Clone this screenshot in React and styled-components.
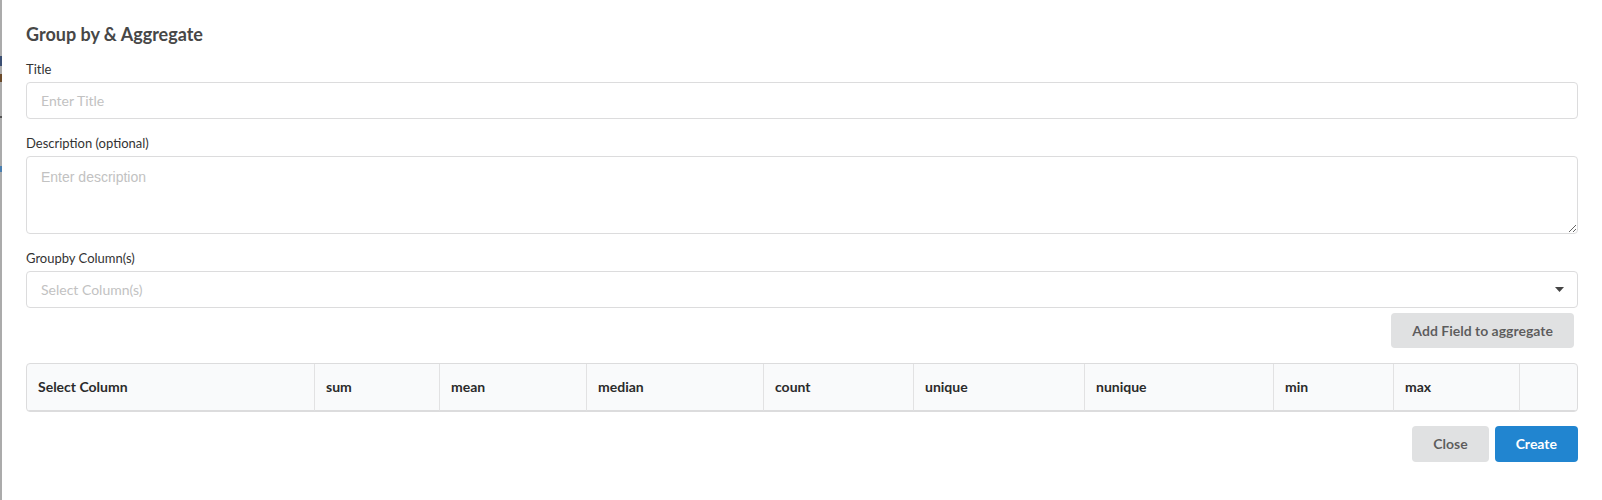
import React from "react";
import styled, { createGlobalStyle } from "styled-components";

const GlobalStyle = createGlobalStyle`
  html, body {
    margin: 0;
    padding: 0;
    background: #ffffff;
  }
  body {
    font-family: Lato, "Helvetica Neue", Arial, sans-serif;
    font-size: 14px;
    color: rgba(0, 0, 0, 0.87);
  }
  * {
    box-sizing: border-box;
  }
`;

const Page = styled.div`
  display: flex;
  width: 1602px;
  height: 500px;
  overflow: hidden;
`;

const Backdrop = styled.div`
  width: 2px;
  flex-shrink: 0;
  background: #ababab;
  display: flex;
  flex-direction: column;
`;

const Speck = styled.span`
  display: block;
  width: 2px;
  margin-top: ${(p) => p.top}px;
  height: ${(p) => p.h}px;
  background: ${(p) => p.color};
`;

const Modal = styled.div`
  flex: 1;
  background: #ffffff;
  padding: 23px 24px 24px 24px;
  display: flex;
  flex-direction: column;
`;

const Header = styled.h2`
  margin: 0 0 16px 0;
  font-size: 18px;
  line-height: 22px;
  font-weight: 700;
  color: #474747;
`;

const Field = styled.div`
  display: flex;
  flex-direction: column;
  margin-bottom: ${(p) => (p.last ? 0 : 16)}px;
`;

const Label = styled.label`
  font-size: 13px;
  line-height: 16px;
  color: #333333;
  margin-bottom: 5px;
`;

const Input = styled.input`
  height: 37px;
  padding: 0 14px;
  border: 1px solid #dcdcdd;
  border-radius: 4px;
  font-family: Lato, sans-serif;
  font-size: 14px;
  color: #333;
  outline: none;

  &::placeholder {
    color: #c2c2c2;
  }
`;

const TextArea = styled.textarea`
  height: 78px;
  padding: 11px 14px;
  border: 1px solid #dcdcdd;
  border-radius: 4px;
  font-family: "Liberation Sans", Arial, sans-serif;
  font-size: 14px;
  line-height: 18px;
  color: #333;
  resize: vertical;
  outline: none;

  &::placeholder {
    color: #c2c2c2;
  }
`;

const Select = styled.div`
  height: 37px;
  padding: 0 13px 0 14px;
  border: 1px solid #dcdcdd;
  border-radius: 4px;
  display: flex;
  align-items: center;
  justify-content: space-between;
  font-size: 14px;
  color: #c2c2c2;
`;

const ButtonRow = styled.div`
  display: flex;
  justify-content: flex-end;
  gap: ${(p) => p.gap || 0}px;
  margin: ${(p) => p.margin};
`;

const Button = styled.button`
  height: ${(p) => p.h || 36}px;
  padding: 0 21px;
  margin-right: ${(p) => p.mr || 0}px;
  border: none;
  border-radius: 4px;
  font-family: Lato, sans-serif;
  font-size: 14px;
  font-weight: 700;
  line-height: 1;
  cursor: pointer;
  background: ${(p) => (p.primary ? "#2185d0" : "#e0e1e2")};
  color: ${(p) => (p.primary ? "#ffffff" : "rgba(0, 0, 0, 0.6)")};
`;

const Table = styled.div`
  display: grid;
  grid-template-columns: 287px 125px 147px 177px 150px 171px 189px 120px 126px 1fr;
  border: 1px solid #dcdcdd;
  border-radius: 4px;
  background: #f9fafb;
  overflow: hidden;
`;

const HeadCell = styled.div`
  padding: 13px 11px;
  line-height: 20px;
  font-size: 14px;
  font-weight: 700;
  color: #2b2b2b;
  border-bottom: 1px solid #dcdcdd;
  border-left: ${(p) => (p.first ? "none" : "1px solid #e2e2e3")};
`;

const Caret = () => (
  <svg width="9" height="5" viewBox="0 0 9 5">
    <polygon points="0,0 9,0 4.5,5" fill="#444" />
  </svg>
);

const columns = [
  "Select Column",
  "sum",
  "mean",
  "median",
  "count",
  "unique",
  "nunique",
  "min",
  "max",
  "",
];

export default function App() {
  return (
    <Page>
      <GlobalStyle />
      <Backdrop>
        <Speck top={56} h={10} color="#3b4f73" />
        <Speck top={8} h={8} color="#6b4a2a" />
        <Speck top={34} h={2} color="#555" />
        <Speck top={48} h={6} color="#4a7fb0" />
      </Backdrop>
      <Modal>
        <Header>Group by &amp; Aggregate</Header>
        <Field>
          <Label>Title</Label>
          <Input placeholder="Enter Title" />
        </Field>
        <Field>
          <Label>Description (optional)</Label>
          <TextArea placeholder="Enter description" />
        </Field>
        <Field last>
          <Label>Groupby Column(s)</Label>
          <Select>
            <span>Select Column(s)</span>
            <Caret />
          </Select>
        </Field>
        <ButtonRow margin="5px 0 15px 0">
          <Button mr={4} h={35}>
            Add Field to aggregate
          </Button>
        </ButtonRow>
        <Table>
          {columns.map((c, i) => (
            <HeadCell key={i} first={i === 0}>
              {c}
            </HeadCell>
          ))}
        </Table>
        <ButtonRow margin="14px 0 0 0" gap={6}>
          <Button>Close</Button>
          <Button primary>Create</Button>
        </ButtonRow>
      </Modal>
    </Page>
  );
}
